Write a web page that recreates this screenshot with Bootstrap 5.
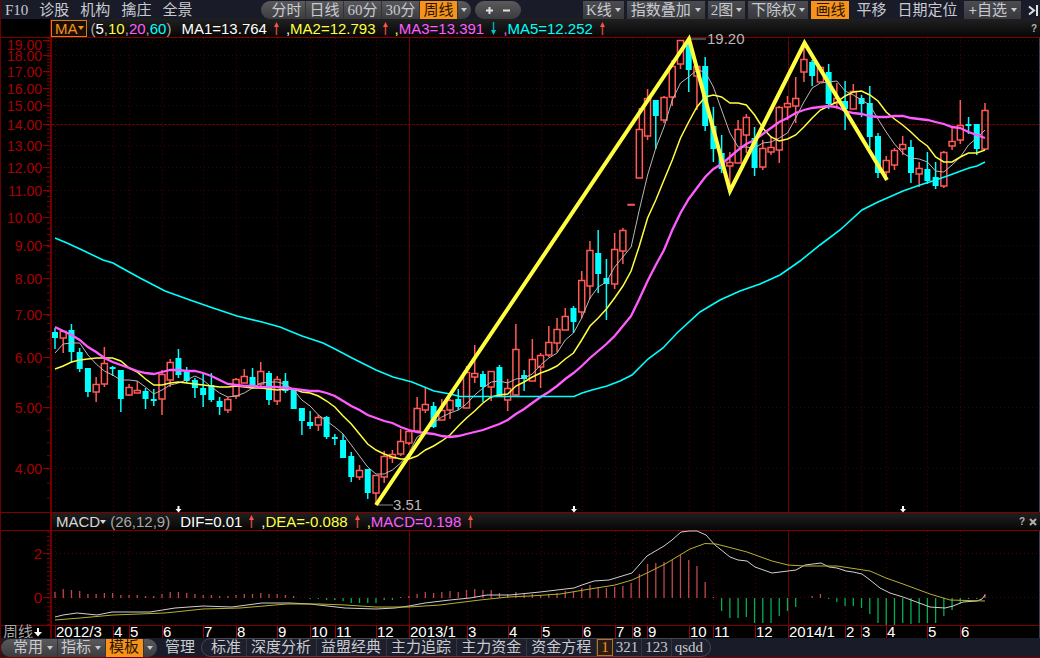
<!DOCTYPE html>
<html lang="zh-CN">
<head>
<meta charset="utf-8">
<meta name="viewport" content="width=device-width, initial-scale=1">
<title>周线 K线图</title>
<link rel="stylesheet" href="https://cdn.jsdelivr.net/npm/bootstrap@5.3.0/dist/css/bootstrap.min.css">
<script src="https://cdn.jsdelivr.net/npm/bootstrap@5.3.0/dist/js/bootstrap.bundle.min.js"></script>
<style>
  :root { --line: #800000; --edge: inset 1px 0 0 #6b0000; }
  body { background: #000; color: #d0d0d0; font-family: "Liberation Sans", "Noto Sans CJK SC", sans-serif; font-size: 15px; }
  .bar { background: #191b29; box-shadow: var(--edge); font-family: "Liberation Serif", "Noto Sans CJK SC", serif; line-height: 18px; white-space: nowrap; }
  .bar-top { height: 19px; padding-left: 5px; }
  .bar-bottom { height: 20px; padding-left: 1px; border-bottom: 1px solid var(--line); position: relative; }
  .bar button { border: 0; background: none; color: #c9cbd0; padding: 0; line-height: 17px; height: 18px; display: flex; align-items: center; justify-content: center; }
  .bar-top button { padding-top: 1px; }
  .links { gap: 11px; }
  .pill { background: linear-gradient(#5a5a5c, #3c3c40); border-radius: 9px; height: 18px; overflow: hidden; }
  .pill button { padding-left: 4px; padding-right: 4px; }
  .pill button + button { border-left: 1px solid #333; padding-left: 3px; }
  .periods { margin-left: 69px; padding-left: 6px; }
  .zoomers { padding: 0 6px; gap: 1px; }
  .bar .hot { background: #f7931a; color: #2a1600; }
  .bar .box { background: linear-gradient(#4b4c50, #37383c); padding-left: 3px; padding-right: 3px; gap: 3px; }
  .bar .wide { padding-left: 4px; padding-right: 4px; gap: 4px; }
  .right-tools { gap: 3px; padding-right: 1px; }
  .caret { width: 0; height: 0; border: 3px solid transparent; border-top: 4px solid currentColor; border-bottom: 0; flex: none; }
  .tabs { border: 1px solid #45464e; border-radius: 10px; height: 19px; padding: 0 4px 0 5px; background: #1d1f2c; margin-left: 6px; }
  .tabs button { padding: 0 5px 0 4px; height: 17px; border-right: 1px solid #34363f; }
  .tabs .tight { padding: 0 3px; }
  .tabs button:last-child { border: 0; }
  .bar .tabs .framed { border: 1px solid #b8701c; color: #f7931a; background: #2a1d14; }
  .head-row { box-shadow: var(--edge); padding-left: 50px; height: 18px; line-height: 17px; white-space: nowrap; }
  .head-body { background: linear-gradient(#202020, #060606); border-left: 2px solid var(--line); padding-right: 3px; }
  .ruled { border-top: 1px solid var(--line); }
  .ma-pick { border: 1px solid #d27d1e; background: #1a0f04; color: #f7931a; height: 17px; line-height: 15px; padding: 0 2px 0 3px; margin-left: -1px; }
  .macd-pick { border: 0; background: none; color: #d8d8d8; padding: 0 0 0 4px; line-height: 17px; }
  .first-value { margin-left: 10px; }
  .arrow { width: 7px; height: 13px; margin: 0 6px; flex: none; }
  .c-w { color: #fff; } .c-y { color: #ffff40; } .c-m { color: #ff5cff; } .c-c { color: #00ffff; } .c-g { color: #a8a8a8; }
  .tiny { border: 0; background: none; color: #b0b0b0; font-size: 10px; font-weight: 700; padding: 0; line-height: 17px; }
  svg.plot { display: block; width: 100%; height: auto; overflow: visible; }
  svg text { font-family: "Liberation Sans", "Noto Sans CJK SC", sans-serif; font-size: 15px; }
  svg text.scale { font-size: 14px; }
</style>
</head>
<body>
<nav class="bar bar-top d-flex align-items-center">
  <div class="links d-flex">
    <button>F10</button><button>诊股</button><button>机构</button><button>擒庄</button><button>全景</button>
  </div>
  <div class="pill periods d-flex">
    <button>分时</button><button>日线</button><button>60分</button><button>30分</button><button class="hot">周线</button>
    <button aria-label="更多周期"><span class="caret"></span></button>
  </div>
  <div class="pill zoomers d-flex align-items-center ms-1">
    <button class="border-0" aria-label="放大"><svg width="9" height="9"><path d="M4.500 1v7M1 4.500h7" stroke="#e0e0e0" stroke-width="2"/></svg></button>
    <button class="border-0" aria-label="缩小"><svg width="9" height="9"><path d="M1 4.500h7" stroke="#e0e0e0" stroke-width="2"/></svg></button>
  </div>
  <div class="right-tools d-flex align-items-center ms-auto">
    <button class="box">K线<span class="caret"></span></button>
    <button class="box wide">指数叠加<span class="caret"></span></button>
    <button class="box">2图<span class="caret"></span></button>
    <button class="box">下除权<span class="caret"></span></button>
    <button class="hot px-1">画线</button>
    <button class="px-1">平移</button>
    <button class="px-1">日期定位</button>
    <button class="box wide"><span><b>+</b>自选</span><span class="caret"></span></button>
    <button class="ps-1" aria-label="收起"><svg width="11" height="11"><path d="M1 1.500l5 4-5 4M9 0v11" fill="none" stroke="#e0e0e0" stroke-width="2"/></svg></button>
  </div>
</nav>

<header class="head-row">
  <div class="head-body d-flex align-items-center h-100">
    <button class="ma-pick d-flex align-items-center">MA<span class="caret"></span></button>
    <span class="ms-1 c-g">(<span class="c-w">5</span>,<span class="c-y">10</span>,<span class="c-m">20</span>,<span class="c-c">60</span>)</span>
    <span class="first-value c-w">MA1=13.764</span><svg class="arrow" viewBox="0 0 7 13"><use href="#up"/></svg>
    <span class="c-y"><span class="c-w">,</span>MA2=12.793</span><svg class="arrow" viewBox="0 0 7 13"><use href="#up"/></svg>
    <span class="c-m"><span class="c-y">,</span>MA3=13.391</span><svg class="arrow" viewBox="0 0 7 13"><use href="#down"/></svg>
    <span class="c-c"><span class="c-m">,</span>MA5=12.252</span><svg class="arrow" viewBox="0 0 7 13"><use href="#up"/></svg>
    <button class="tiny ms-auto" aria-label="帮助">?</button>
  </div>
</header>

<main>
  <div class="ruled"><svg class="plot" id="price" viewBox="0 38 1040 474" role="img" aria-label="K线走势">
    <defs>
      <g id="up"><path d="M3.500 13V3" stroke="#d04038" stroke-width="1.500"/><path d="M3.500 0L6 5H1z" fill="#ff5040"/></g>
      <g id="down"><path d="M3.500 0v10" stroke="#00a8b0" stroke-width="1.500"/><path d="M3.500 13L1 8h5z" fill="#00c8d0"/></g>
    </defs>
  </svg></div>
  <div class="head-row ruled">
    <div class="head-body d-flex align-items-center h-100">
      <button class="macd-pick d-flex align-items-center">MACD<span class="caret"></span></button>
      <span class="ms-1 c-g">(26,12,9)</span>
      <span class="first-value c-w">DIF=0.01</span><svg class="arrow" viewBox="0 0 7 13"><use href="#up"/></svg>
      <span class="c-y"><span class="c-w">,</span>DEA=-0.088</span><svg class="arrow" viewBox="0 0 7 13"><use href="#up"/></svg>
      <span class="c-m"><span class="c-y">,</span>MACD=0.198</span><svg class="arrow" viewBox="0 0 7 13"><use href="#up"/></svg>
      <button class="tiny ms-auto" aria-label="指标帮助">?</button>
      <button class="tiny ms-1 d-flex" aria-label="关闭"><svg width="8" height="8"><path d="M1 1l6 6M7 1L1 7" stroke="#b0b0b0" stroke-width="2"/></svg></button>
    </div>
  </div>
  <div class="ruled"><svg class="plot" id="macd" viewBox="0 531 1040 107" role="img" aria-label="MACD"></svg></div>
</main>

<footer class="bar bar-bottom d-flex align-items-center">
  <div class="pill d-flex ps-2">
    <button>常用<span class="caret ms-1"></span></button><button>指标<span class="caret ms-1"></span></button><button class="hot">模板</button>
    <button aria-label="更多模板"><span class="caret"></span></button>
  </div>
  <button class="ms-2">管理</button>
  <div class="tabs d-flex align-items-center">
    <button>标准</button><button>深度分析</button><button>益盟经典</button><button>主力追踪</button><button>主力资金</button><button>资金方程</button><button class="framed tight">1</button><button class="tight">321</button><button class="tight">123</button><button class="tight">qsdd</button>
  </div>
</footer>

<script>
const NS = 'http://www.w3.org/2000/svg';
const price = document.getElementById('price'), macd = document.getElementById('macd');
function add(parent, tag, attrs, text) {
  const el = document.createElementNS(NS, tag);
  for (const k in attrs) el.setAttribute(k, attrs[k]);
  if (text !== undefined) el.textContent = text;
  parent.appendChild(el);
  return el;
}
const barX = i => 55 + i * 930 / 113;
const priceY = p => 469 - 274.4 * Math.log(p / 4);
const macdY = v => 598 - 22 * v;
const path = (svg, d, stroke, w, extra) => add(svg, 'path', { d, stroke, 'stroke-width': w, fill: 'none', ...extra });
const DOT = { 'stroke-dasharray': '1 3' };

/* month starts: x, label, solid rule at new year */
const months = [[55,'2012/3'],[113,'4'],[129,'5'],[162,'6'],[203,'7'],[236,'8'],[277,'9'],[310,'10'],[335,'11'],[376,'12'],[409,'2013/1',1],[467,'3'],[508,'4'],[541,'5'],[582,'6'],[615,'7'],[632,'8'],[647,'9'],[689,'10'],[713,'11'],[755,'12'],[788,'2014/1',1],[845,'2'],[861,'3'],[886,'4'],[927,'5'],[960,'6']];
for (const [x, label, solid] of months) {
  const c = solid ? '#6a0000' : '#4a0000', o = solid ? {} : DOT;
  path(price, `M${x + .5} 38V512`, c, 1, o);
  path(macd, `M${x + .5} 531V625`, c, 1, o);
  path(macd, `M${x + .5} 625V638`, '#a00000', 1);
  add(macd, 'text', { x: x + 1, y: 637, fill: '#fff' }, label);
}

/* price axis */
let ticks = '';
for (let k = 18; k <= 96; k++) ticks += `M47 ${priceY(k / 5).toFixed(1)}H50`;
path(price, ticks, '#800000', 1);
for (let p = 4; p <= 19; p++) {
  const y = Math.round(priceY(p)) - .5;
  path(price, `M43 ${y}H50`, '#900000', 1);
  if (p === 14) path(price, `M52 ${y}H1039`, '#700000', 1, { 'stroke-dasharray': '3 1' });
  else path(price, `M52 ${y}H1039`, '#3c0000', 1, DOT);
  add(price, 'text', { class: 'scale', x: 42, y: y + (p === 19 ? 9 : 5), fill: '#a80000', 'text-anchor': 'end' }, p.toFixed(2));
}
path(price, 'M51 38V512', '#700000', 2);
path(macd, 'M51 531V638', '#700000', 2);

/* macd axis */
ticks = '';
for (let k = -6; k <= 15; k++) ticks += `M47 ${macdY(k / 5).toFixed(1)}H50`;
path(macd, ticks, '#800000', 1);
for (const v of [0, 2]) {
  path(macd, `M43 ${macdY(v) - .5}H50`, '#900000', 1);
  path(macd, `M52 ${macdY(v) - .5}H1039`, '#4a0000', 1, DOT);
  add(macd, 'text', { x: 42, y: macdY(v) + 5, fill: '#a80000', 'text-anchor': 'end' }, v);
}
path(macd, 'M0 625.5H1040', '#800000', 1);
for (const [s, a, b] of [[price, 38, 512], [macd, 531, 638]]) {
  path(s, `M.5 ${a}V${b}`, '#6b0000', 1);
  path(s, `M1039.5 ${a}V${b}`, '#3a3f55', 1);
}

/* averages: one height per weekly bar */
const ma5 = [353,344,343,343,355,364,371,375,380,380,381,387,394,390,385,383,380,376,380,387,393,397,396,393,388,383,382,382,384,390,400,406,415,421,427,434,445,456,467,474,474,470,463,453,437,432,423,417,413,410,404,395,388,382,381,383,379,378,374,365,358,353,340,333,318,298,287,282,267,257,247,210,175,148,127,100,83,77,70,72,87,110,133,147,147,148,143,142,138,133,118,102,88,83,82,81,91,95,100,105,119,132,144,153,158,159,162,171,172,165,157,145,138,130];
const ma10 = [369,366,362,360,359,358,358,358,361,368,372,379,385,385,383,382,383,384,385,386,387,387,386,387,388,388,389,390,389,389,392,393,396,401,407,416,424,434,444,450,454,457,459,459,456,450,446,441,435,426,418,411,403,397,395,394,386,382,377,373,370,366,359,353,340,326,318,309,298,286,271,246,218,200,180,160,138,122,107,97,95,97,103,103,105,115,128,137,141,139,135,127,118,110,106,102,96,92,91,95,101,112,119,125,132,140,146,157,162,162,157,153,153,150];
const ma20 = [327,331,335,340,347,352,358,362,365,368,371,373,374,372,370,370,371,371,373,376,380,384,385,386,386,387,387,387,388,389,390,391,391,393,396,401,406,410,415,418,421,423,427,430,432,433,434,436,437,436,434,432,430,427,424,420,414,409,403,397,392,386,379,373,366,358,351,344,336,326,316,299,281,265,250,230,213,199,188,177,169,164,157,150,144,140,134,128,122,118,113,110,108,107,106,107,111,113,114,116,117,117,116,116,118,119,120,122,124,127,128,132,135,138];
const line = a => 'M' + a.map((y, i) => `${barX(i).toFixed(1)} ${y}`).join('L');

/* candles: direction, high, body top, body bottom, low */
const candles = `d328 332 338 349|u331 331 338 353|d324 330 352 363|d348 352 369 372|d368 368 392 397|u377 384 392 402|u347 363 384 387|d366 367 369 376|d370 370 399 412|u384 387 395 396|u381 390 393 393|d388 391 399 409|d389 399 401 406|u370 374 399 415|u359 362 380 387|d349 358 375 378|d367 372 381 383|d378 380 388 398|d373 388 395 407|d373 385 400 402|d397 401 407 415|u397 399 410 413|u378 379 396 399|u369 376 383 383|d368 377 386 388|u362 371 384 389|d371 373 400 405|u376 379 401 405|d373 381 391 393|d389 389 409 409|d408 408 421 435|d411 422 426 429|u415 417 425 431|d416 417 437 439|d434 437 439 445|d434 440 458 458|d452 456 477 482|u465 470 477 480|d469 469 493 499|u475 475 493 504|u451 456 477 483|u450 454 458 463|u429 441 454 456|u430 431 443 445|u397 408 431 433|u387 404 410 413|d402 406 427 428|u399 410 420 420|u399 400 410 419|d389 399 407 410|u366 372 408 408|u345 373 377 383|d371 374 387 402|u371 371 387 401|d365 367 397 397|u379 388 400 411|u324 349 395 397|d370 375 379 391|u339 359 381 381|u353 355 367 388|u326 342 355 357|u318 329 343 352|u308 316 330 330|d306 308 322 333|u271 280 312 318|u241 250 286 299|d230 253 274 293|d259 278 284 320|u233 249 284 289|u228 230 251 264|u204 204 205 205|u108 129 178 178|u89 98 136 140|d100 100 116 149|u96 97 120 123|u60 66 97 106|u40 40 64 69|d39 42 70 92|u65 66 76 110|d57 66 126 131|d107 126 149 162|d135 153 169 173|u152 162 166 187|u120 129 163 163|u114 117 135 153|d127 138 168 176|u140 148 167 170|u136 147 152 155|u106 107 150 163|u96 103 107 120|u77 98 106 123|u45 59 72 82|d60 62 76 86|u66 67 82 82|d64 72 104 109|u83 98 103 109|d81 101 109 130|u84 91 109 109|d95 98 104 117|d86 103 137 148|d133 136 173 178|u156 160 172 177|u148 150 165 170|u136 144 149 155|d140 147 173 183|u162 168 174 187|d152 169 181 184|d162 177 186 189|u151 152 186 188|u126 141 146 150|u100 125 140 144|d117 124 126 134|d124 124 149 155|u103 110 149 150`;
candles.split('|').forEach((c, i) => {
  const [hi, top, bot, lo] = c.slice(1).split(' ').map(Number), x = barX(i);
  if (c[0] === 'd') {
    path(price, `M${x} ${hi}V${lo}`, '#00ffff', 1.5);
    add(price, 'rect', { x: x - 3, y: top, width: 6, height: bot - top, fill: '#00ffff' });
  } else {
    path(price, `M${x} ${hi}V${top}M${x} ${bot}V${lo}M${x - 3} ${top + .5}h6V${bot}h-6z`, '#ff5a55', 1.5);
  }
});
path(price, line(ma5), '#b8b8b8', 1);
path(price, line(ma10), '#ffff40', 1.5);
path(price, line(ma20), '#ff5cff', 2.3);
path(price, 'M55 238L67 243L80 249L103 260L113 263L120 267L140 278L165 291L190 300L213 308L237 316L262 322L280 327L302 336L323 343L335 349L352 358L376 370L393 377L412 382L434 391L450 394L460 396.500H574L582 393L592 390L607 386L620 381L632 375L648 359L663 348L677 333L700 312L720 300L740 291L760 284L780 275L800 261L820 245L840 230L862 210L878 202L903 191L920 185L936 180L950 175L969 168L977 166L985 162', '#00ffff', 1.6);

/* drawn trend line with its extreme price labels */
path(price, 'M689 39H706M378 505H393', '#8a8a8a', 1);
path(price, 'M376 505L689 39L730 191L804.500 43L887 180', '#ffff40', 4);
add(price, 'text', { x: 707, y: 44, fill: '#b8b8b8' }, '19.20');
add(price, 'text', { x: 393, y: 510, fill: '#b8b8b8' }, '3.51');

const marker = (svg, x, y) => add(svg, 'path', { d: `M${x - 1} ${y - 3}h2v3h2l-3 3.500l-3 -3.500h2z`, fill: '#fff' });
for (const x of [178.5, 574, 903]) marker(price, x, 509);
add(macd, 'text', { x: 3, y: 637, fill: '#a8a8a8' }, '周线');
add(macd, 'path', { d: 'M37 628h2v4h3l-4 4.500l-4 -4.500h3z', fill: '#fff' });

/* histogram in pixels from the zero line */
const hist = [6,9,8,7,4,4,5,5,3,3,3,2,2,4,6,6,5,4,3,3,2,2,3,4,4,5,4,4,3,2,0,-1,-1,-2,-2,-3,-5,-5,-5,-5,-2,-2,1,2,4,6,5,6,7,6,8,9,8,8,5,4,6,5,4,3,4,5,7,6,10,13,11,10,11,12,15,24,34,35,36,38,43,38,32,16,1,-13,-20,-20,-19,-25,-25,-25,-18,-13,-9,0,2,4,-1,-4,-8,-8,-10,-16,-25,-27,-27,-25,-26,-25,-25,-25,-18,-12,-5,-1,-1,4];
hist.forEach((h, i) => path(macd, `M${barX(i)} 598V${598 - h}`, h > 0 ? '#c04848' : '#00b050', 1.3));
path(macd, 'M55 617L63 615L77 613L97 615L112 612L150 612L175 608L203 606L232 607L262 603L290 603L310 604L345 608L376 609L395 608L409 606L425 603L450 600L470 598L487 595L510 595L540 592L574 588L582 585L594 581L609 580L632 573L647 556L664 546L672 540L681 532L689 531L697 531L706 535L715 545L730 557L738 560L747 561L755 567L772 573L796 570L805 565L821 563L829 567L837 568L846 571L853 572L862 574L870 580L880 588L890 593L903 597L930 607L945 608L953 606L963 602L977 601L982 599L985 595', '#d0d0d0', 1);
path(macd, 'M55 620L80 618L113 615L165 613L203 609L240 608L287 604L320 604L345 605L376 607L409 607L440 605L480 600L508 597L530 596L560 594L590 589L615 585L632 580L647 573L665 564L690 549L705 543.500L716 544L728 547L747 552L772 561L788 565L805 566L837 566L870 571L886 578L903 584L930 594L950 600L985 601', '#b8b030', 1);
</script>
</body>
</html>
